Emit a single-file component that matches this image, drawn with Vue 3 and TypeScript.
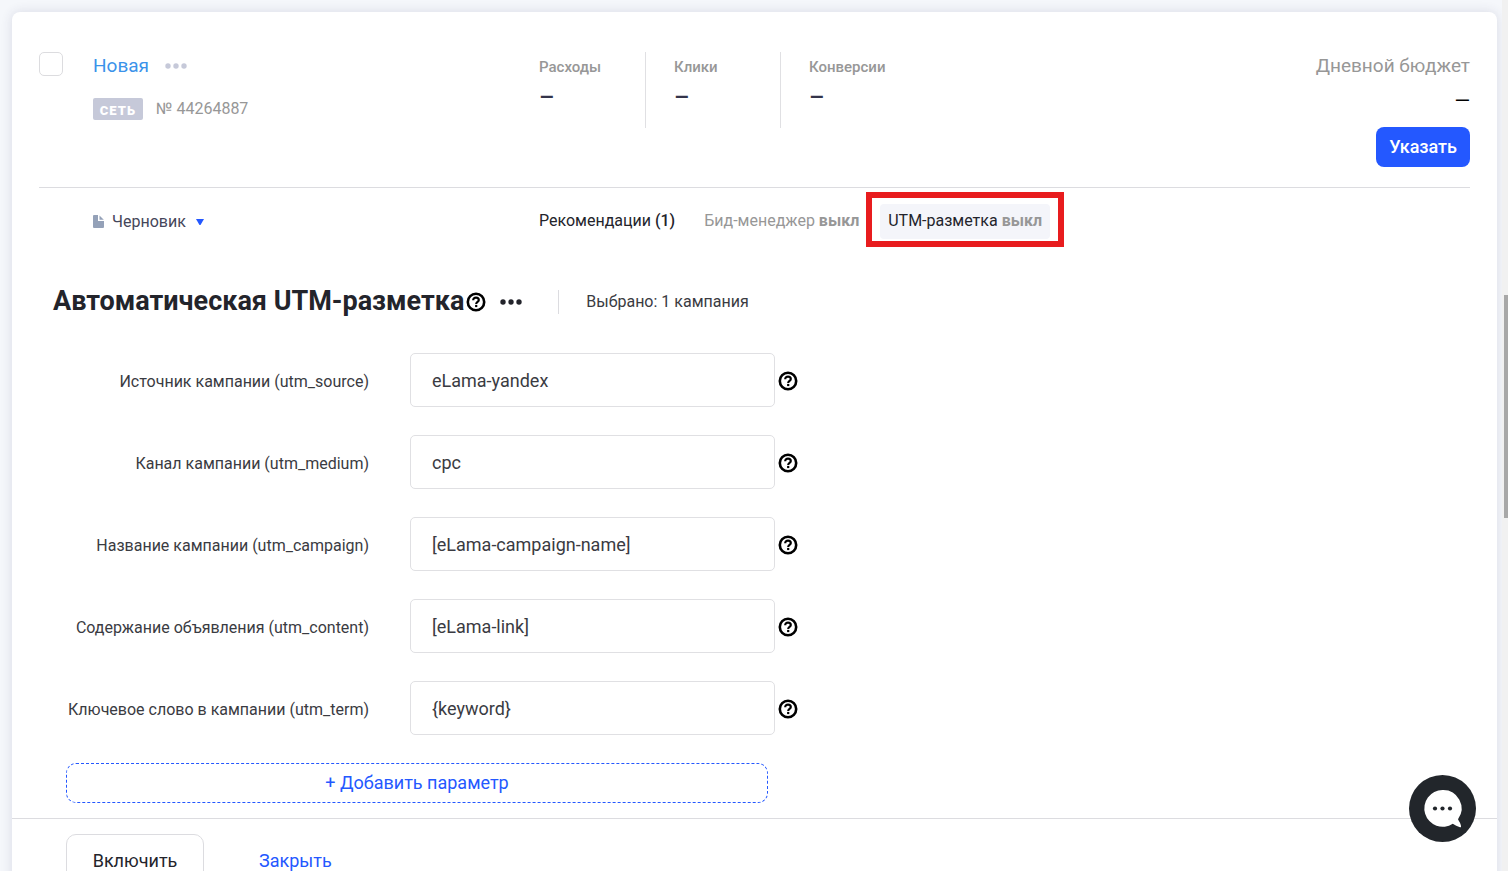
<script setup lang="ts">
import { ref } from 'vue'

interface Metric {
  title: string
  value: string
}

interface UtmField {
  id: string
  label: string
  value: string
}

const selected = ref(false)

const metrics: Metric[] = [
  { title: 'Расходы', value: '–' },
  { title: 'Клики', value: '–' },
  { title: 'Конверсии', value: '–' },
]

const fields = ref<UtmField[]>([
  { id: 'utm_source', label: 'Источник кампании (utm_source)', value: 'eLama-yandex' },
  { id: 'utm_medium', label: 'Канал кампании (utm_medium)', value: 'cpc' },
  { id: 'utm_campaign', label: 'Название кампании (utm_campaign)', value: '[eLama-campaign-name]' },
  { id: 'utm_content', label: 'Содержание объявления (utm_content)', value: '[eLama-link]' },
  { id: 'utm_term', label: 'Ключевое слово в кампании (utm_term)', value: '{keyword}' },
])
</script>

<template>
  <div class="page">
    <main class="card">
      <div class="campaign">
        <header class="summary">
          <input v-model="selected" class="check" type="checkbox" aria-label="Выбрать кампанию" />
          <div class="identity">
            <div class="name-row">
              <a class="name" href="#">Новая</a>
              <button class="dots-button" type="button" aria-label="Действия с кампанией">
                <svg width="22" height="6" viewBox="0 0 22 6" fill="#c6c9d9">
                  <circle cx="3" cy="3" r="2.7" />
                  <circle cx="11" cy="3" r="2.7" />
                  <circle cx="19" cy="3" r="2.7" />
                </svg>
              </button>
            </div>
            <div class="meta">
              <span class="badge">СЕТЬ</span>
              <span>№ 44264887</span>
            </div>
          </div>
          <dl class="metrics">
            <div v-for="m in metrics" :key="m.title" class="metric">
              <dt>{{ m.title }}</dt>
              <dd>{{ m.value }}</dd>
            </div>
          </dl>
          <div class="budget">
            <span class="budget-title">Дневной бюджет</span>
            <span class="budget-value">—</span>
            <button class="primary" type="button">Указать</button>
          </div>
        </header>

        <div class="status-row">
          <button class="status" type="button">
            <svg width="11" height="13" viewBox="0 0 11 13" fill="#94a1b8">
              <path d="M1 0H5V6H11V12Q11 13 10 13H1Q0 13 0 12V1Q0 0 1 0Z" />
              <path d="M6.5 0.5L10.8 4.8H6.5Z" />
            </svg>
            <span>Черновик</span>
            <svg class="caret" width="8" height="6" viewBox="0 0 8 6" fill="#2458ff">
              <path d="M0 0H8L4.8 5.4Q4 6.4 3.2 5.4Z" />
            </svg>
          </button>
          <nav class="tabs">
            <button class="tab" type="button">Рекомендации <b class="count">(1)</b></button>
            <button class="tab muted" type="button">Бид-менеджер <b>выкл</b></button>
            <button class="tab active" type="button">UTM-разметка <b>выкл</b><i class="marker"></i></button>
          </nav>
        </div>
      </div>

      <section class="utm">
        <div class="heading">
          <h1>Автоматическая UTM-разметка</h1>
          <button class="help" type="button" aria-label="Справка">
            <svg width="20" height="20" viewBox="0 0 20 20" fill="none" stroke="#000">
              <circle cx="10" cy="10" r="8.2" stroke-width="2.6" />
              <path d="M7.2 8.3C7.2 6.6 8.4 5.6 10 5.6S12.8 6.6 12.8 8C12.8 9.9 10.2 9.9 10.2 11.9" stroke-width="2.2" />
              <path d="M9.1 14H11.3" stroke-width="2.2" />
            </svg>
          </button>
          <button class="dots-button dark" type="button" aria-label="Действия с разметкой">
            <svg width="22" height="6" viewBox="0 0 22 6" fill="#23242b">
              <circle cx="3" cy="3" r="2.7" />
              <circle cx="11" cy="3" r="2.7" />
              <circle cx="19" cy="3" r="2.7" />
            </svg>
          </button>
          <span class="chosen">Выбрано: 1 кампания</span>
        </div>

        <form class="form" @submit.prevent>
          <div v-for="f in fields" :key="f.id" class="field">
            <label :for="f.id">{{ f.label }}</label>
            <input :id="f.id" v-model="f.value" type="text" />
            <button class="help" type="button" aria-label="Справка">
              <svg width="20" height="20" viewBox="0 0 20 20" fill="none" stroke="#000">
                <circle cx="10" cy="10" r="8.2" stroke-width="2.6" />
                <path d="M7.2 8.3C7.2 6.6 8.4 5.6 10 5.6S12.8 6.6 12.8 8C12.8 9.9 10.2 9.9 10.2 11.9" stroke-width="2.2" />
                <path d="M9.1 14H11.3" stroke-width="2.2" />
              </svg>
            </button>
          </div>
          <button class="add" type="button">+ Добавить параметр</button>
        </form>
      </section>

      <footer class="actions">
        <button class="enable" type="button">Включить</button>
        <button class="close" type="button">Закрыть</button>
      </footer>
    </main>

    <div class="scroll-track"><div class="scroll-thumb"></div></div>

    <button class="chat" type="button" aria-label="Открыть чат">
      <svg width="67" height="67" viewBox="0 0 67 67">
        <circle cx="33.5" cy="33.5" r="33.5" fill="#22262b" />
        <path
          d="M33.5 15A18.4 18.4 0 1 0 43.8 48.8C46 50 48.4 51.6 51 52.2C52.2 52.4 52.2 51.4 51.9 50.4C51.4 48 50.2 46.6 49 44.2A18.4 18.4 0 0 0 33.5 15Z"
          fill="#fff"
        />
        <circle cx="26" cy="33.5" r="2.1" fill="#22262b" />
        <circle cx="33.5" cy="33.5" r="2.1" fill="#22262b" />
        <circle cx="41" cy="33.5" r="2.1" fill="#22262b" />
      </svg>
    </button>
  </div>
</template>

<style>
body {
  background: #f5f7fb;
}
</style>

<style scoped>
.page {
  display: flex;
  box-sizing: border-box;
  height: 100vh;
  overflow: hidden;
  padding: 12px 0 0 12px;
  background: #f5f7fb;
  color: #23242b;
  font-family: Roboto, 'Liberation Sans', sans-serif;
  font-size: 16px;
  line-height: 20px;
}

.page *,
.page *::before {
  box-sizing: border-box;
}

button {
  padding: 0;
  border: 0;
  background: none;
  color: inherit;
  font: inherit;
  cursor: pointer;
}

svg {
  display: block;
}

.card {
  flex: 1;
  align-self: flex-start;
  background: #fff;
  border-radius: 8px 8px 0 0;
  box-shadow: 0 0 12px rgba(50, 50, 90, 0.14);
}

.campaign {
  padding: 0 27px;
}

.summary {
  display: grid;
  grid-template-columns: 54px 446px 1fr auto;
  align-items: start;
  padding: 40px 0 20px;
  border-bottom: 1px solid #dcdce0;
}

.check {
  appearance: none;
  width: 24px;
  height: 24px;
  margin: 0;
  border: 1px solid #dcdcdf;
  border-radius: 5px;
  background: #fff;
}

.name-row {
  display: flex;
  align-items: center;
  gap: 16px;
  height: 28px;
}

.name {
  color: #3b93ea;
  font-size: 19px;
  line-height: 28px;
  text-decoration: none;
}

.meta {
  display: flex;
  align-items: center;
  gap: 13px;
  margin-top: 18px;
  color: #979797;
  line-height: 22px;
}

.badge {
  width: 50px;
  height: 22px;
  border-radius: 2px;
  background: #c6c9d9;
  color: #fff;
  font-size: 13px;
  font-weight: 900;
  letter-spacing: 1px;
  line-height: 26px;
  text-align: center;
}

.metrics {
  display: flex;
  margin: 0;
}

.metric {
  width: 135px;
  height: 76px;
  padding: 5px 0 0 28px;
  border-right: 1px solid #e0e0e3;
}

.metric:first-child {
  width: 107px;
  padding-left: 0;
}

.metric:last-child {
  border-right: 0;
}

.metric dt {
  color: #979797;
  font-size: 15px;
  font-weight: 500;
}

.metric dd {
  margin: 10px 0 0;
  color: #34344a;
  font-size: 24px;
  font-weight: 500;
}

.budget {
  display: flex;
  flex-direction: column;
  align-items: flex-end;
}

.budget-title {
  color: #979797;
  font-size: 19px;
  line-height: 28px;
}

.budget-value {
  margin-top: 11px;
  color: #000;
  font-size: 20px;
}

.primary {
  height: 40px;
  margin-top: 16px;
  padding: 0 13px;
  border-radius: 8px;
  background: #2458ff;
  color: #fff;
  font-size: 18px;
  font-weight: 500;
}

.status-row {
  display: grid;
  grid-template-columns: 446px 1fr;
  align-items: center;
  padding: 16px 0 0 54px;
}

.status {
  display: flex;
  align-items: center;
  justify-self: start;
  gap: 8px;
  color: #45465a;
}

.caret {
  margin-left: 2px;
}

.tabs {
  display: flex;
  gap: 13px;
  margin-left: -8px;
}

.tab {
  position: relative;
  height: 35px;
  padding: 0 8px 2px;
  border-radius: 4px;
  white-space: nowrap;
}

.tab b {
  color: #979797;
  font-weight: 700;
}

.tab .count {
  color: inherit;
  font-weight: 500;
}

.muted {
  color: #979797;
}

.active {
  background: #f4f5fa;
}

.marker {
  position: absolute;
  inset: -12px -14px -8px;
  border: 6px solid #e81c1e;
}

.utm {
  padding: 46px 41px 15px;
}

.heading {
  display: flex;
  align-items: center;
  height: 34px;
}

h1 {
  margin: 0;
  padding-bottom: 2px;
  font-size: 27px;
  font-weight: 700;
  line-height: 32px;
}

.heading .help {
  margin-left: 2px;
}

.dark {
  margin-left: 14px;
}

.chosen {
  display: flex;
  align-items: center;
  height: 24px;
  margin-left: 36px;
  padding-left: 27px;
  border-left: 1px solid #dcdce0;
  color: #3a3b42;
}

.form {
  display: flex;
  flex-direction: column;
  gap: 28px;
  margin-top: 34px;
}

.field {
  display: grid;
  grid-template-columns: 316px 365px auto;
  align-items: center;
  justify-content: start;
}

.field label {
  padding-top: 3px;
  color: #3a3b42;
  text-align: right;
  white-space: nowrap;
}

.field input {
  height: 54px;
  margin-left: 41px;
  width: 365px;
  padding: 0 21px;
  border: 1px solid #e0e0e3;
  border-radius: 5px;
  background: #fff;
  color: #3a3b42;
  font: inherit;
  font-size: 18px;
}

.field .help {
  margin-left: 44px;
  padding-top: 2px;
}

.add {
  width: 702px;
  height: 40px;
  margin-left: 13px;
  border: 1px dashed #2458ff;
  border-radius: 10px;
  color: #2458ff;
  font-size: 18px;
}

.actions {
  display: flex;
  gap: 55px;
  padding: 15px 54px;
  border-top: 1px solid #dcdce0;
  font-size: 18px;
}

.enable {
  width: 138px;
  height: 54px;
  border: 1px solid #dcdce0;
  border-radius: 10px;
}

.close {
  color: #2458ff;
}

.scroll-track {
  width: 6px;
  margin: -12px 0 0 5px;
  padding: 295px 0 0 2px;
  background: #f1f1f1;
}

.scroll-thumb {
  height: 223px;
  background: #a8a8a8;
}

.chat {
  position: fixed;
  right: 32px;
  bottom: 29px;
  border-radius: 50%;
}
</style>
